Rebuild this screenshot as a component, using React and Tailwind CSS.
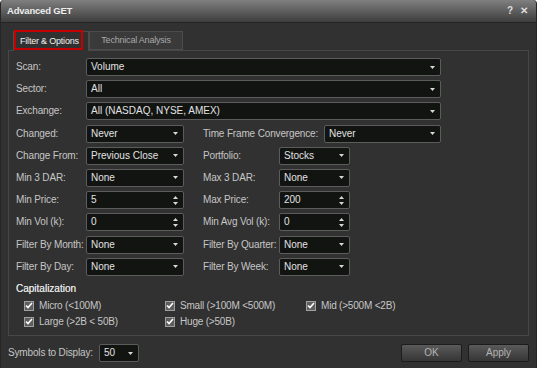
import React from "react";

const Arrow = () => (
  <svg width="5" height="3" viewBox="0 0 5 3" className="shrink-0">
    <path d="M0 0 H5 L2.5 3 Z" fill="#d8d8d8" />
  </svg>
);

const Spin = () => (
  <svg width="5" height="9" viewBox="0 0 5 9" className="shrink-0">
    <path d="M0 3 H5 L2.5 0 Z" fill="#d8d8d8" />
    <path d="M0 6 H5 L2.5 9 Z" fill="#d8d8d8" />
  </svg>
);

const Box = ({ w, value, spin }) => (
  <div
    className={`${w} h-[18px] shrink-0 flex items-center justify-between pl-[4px] pr-[5px] bg-[#121412] border border-[#5c5c5c] rounded-[2px] text-[#e2e2e2] whitespace-nowrap`}
  >
    <span className="leading-none">{value}</span>
    {spin ? <Spin /> : <Arrow />}
  </div>
);

const Label = ({ w, children }) => (
  <div className={`${w} shrink-0 text-[#c6c6c6] leading-none whitespace-nowrap tracking-[-0.15px]`}>
    {children}
  </div>
);

const Check = ({ label, w }) => (
  <div className={`${w} flex items-center gap-[5px]`}>
    <div className="w-[10px] h-[10px] bg-[#5e5e5e] border border-[#a0a0a0] flex items-center justify-center">
      <svg width="8" height="7" viewBox="0 0 8 7">
        <path d="M1 3.5 L3 5.5 L7 1" stroke="#ffffff" strokeWidth="1.6" fill="none" />
      </svg>
    </div>
    <span className="text-[#c6c6c6] leading-none whitespace-nowrap tracking-[-0.2px]">{label}</span>
  </div>
);

const Row2 = ({ l1, v1, s1, l2, v2, s2 }) => (
  <div className="flex items-center">
    <Label w="w-[70px]">{l1}</Label>
    <Box w="w-[98px]" value={v1} spin={s1} />
    <div className="w-[19px] shrink-0" />
    <Label w="w-[76px]">{l2}</Label>
    <Box w="w-[71px]" value={v2} spin={s2} />
  </div>
);

export default function App() {
  return (
    <div
      className="w-[537px] h-[368px] bg-[#313131] flex flex-col text-[10px] overflow-hidden rounded-t-[4px] border-x border-[#262626]"
      style={{ fontFamily: '"Liberation Sans", Arial, sans-serif' }}
    >
      {/* Title bar */}
      <div className="h-[23px] shrink-0 flex items-center justify-between pl-[6px] pr-[8px] bg-gradient-to-b from-[#808080] via-[#5e5e5e] to-[#3e3e3e] border-b border-[#242424]">
        <span className="font-bold text-[#ececec] text-[9.5px] tracking-[-0.2px] leading-none">
          Advanced GET
        </span>
        <div className="flex items-center gap-[7px] text-[#dcdcdc] font-bold text-[10px] leading-none">
          <span>?</span>
          <span>✕</span>
        </div>
      </div>

      {/* Content */}
      <div className="flex-1 flex flex-col px-[7px] pt-[7px]">
        {/* Tabs */}
        <div className="flex items-end h-[20px] pl-[5px]">
          <div className="relative h-[20px] w-[76px] border-t border-x border-[#4c4c4c] bg-[#313131] z-10 -mb-px flex items-center">
            <div className="absolute left-0 -top-[2px] w-[69px] h-[20px] border-2 border-[#c40000]" />
            <span className="pl-[6px] text-[#f0f0f0] text-[9px] tracking-[-0.2px] leading-none whitespace-nowrap">
              Filter &amp; Options
            </span>
          </div>
          <div className="h-[19px] w-[94px] border border-[#4c4c4c] bg-[#3a3a3a] flex items-center justify-center">
            <span className="text-[#a8a8a8] text-[9px] tracking-[-0.2px] leading-none whitespace-nowrap">
              Technical Analysis
            </span>
          </div>
        </div>

        {/* Panel */}
        <div className="h-[286px] border border-[#474747] flex flex-col pl-[7px] pt-[7px]">
          <div className="flex flex-col gap-[4.2px]">
            <div className="flex items-center">
              <Label w="w-[70px]">Scan:</Label>
              <Box w="w-[355px]" value="Volume" />
            </div>
            <div className="flex items-center">
              <Label w="w-[70px]">Sector:</Label>
              <Box w="w-[355px]" value="All" />
            </div>
            <div className="flex items-center">
              <Label w="w-[70px]">Exchange:</Label>
              <Box w="w-[355px]" value="All (NASDAQ, NYSE, AMEX)" />
            </div>
            <div className="flex items-center">
              <Label w="w-[70px]">Changed:</Label>
              <Box w="w-[98px]" value="Never" />
              <div className="w-[19px] shrink-0" />
              <Label w="w-[121px]">Time Frame Convergence:</Label>
              <Box w="w-[117px]" value="Never" />
            </div>
            <Row2 l1="Change From:" v1="Previous Close" l2="Portfolio:" v2="Stocks" />
            <Row2 l1="Min 3 DAR:" v1="None" l2="Max 3 DAR:" v2="None" />
            <Row2 l1="Min Price:" v1="5" s1 l2="Max Price:" v2="200" s2 />
            <Row2 l1="Min Vol (k):" v1="0" s1 l2="Min Avg Vol (k):" v2="0" s2 />
            <Row2 l1="Filter By Month:" v1="None" l2="Filter By Quarter:" v2="None" />
            <Row2 l1="Filter By Day:" v1="None" l2="Filter By Week:" v2="None" />
          </div>

          <div className="mt-[8px] text-[#e0e0e0] leading-none tracking-[0px] [text-shadow:0_0_0.4px_#e0e0e0]">
            Capitalization
          </div>
          <div className="flex flex-col gap-[6px] pl-[8px] mt-[7px]">
            <div className="flex items-center">
              <Check w="w-[141px]" label="Micro (<100M)" />
              <Check w="w-[141px]" label="Small (>100M <500M)" />
              <Check w="w-[141px]" label="Mid (>500M <2B)" />
            </div>
            <div className="flex items-center">
              <Check w="w-[141px]" label="Large (>2B < 50B)" />
              <Check w="w-[141px]" label="Huge (>50B)" />
            </div>
          </div>
        </div>

        {/* Footer */}
        <div className="flex items-center mt-[8px]">
          <div className="text-[#c6c6c6] leading-none w-[91px] shrink-0 whitespace-nowrap tracking-[-0.15px]">
            Symbols to Display:
          </div>
          <Box w="w-[40px]" value="50" />
          <div className="flex-1" />
          <button className="w-[61px] h-[18px] rounded-[2px] border border-[#1c1c1c] bg-gradient-to-b from-[#5a5a5a] to-[#363636] text-[#b4b4b4] leading-none">
            OK
          </button>
          <button className="ml-[6px] w-[61px] h-[18px] rounded-[2px] border border-[#1c1c1c] bg-gradient-to-b from-[#5a5a5a] to-[#363636] text-[#b4b4b4] leading-none">
            Apply
          </button>
        </div>
      </div>
    </div>
  );
}
